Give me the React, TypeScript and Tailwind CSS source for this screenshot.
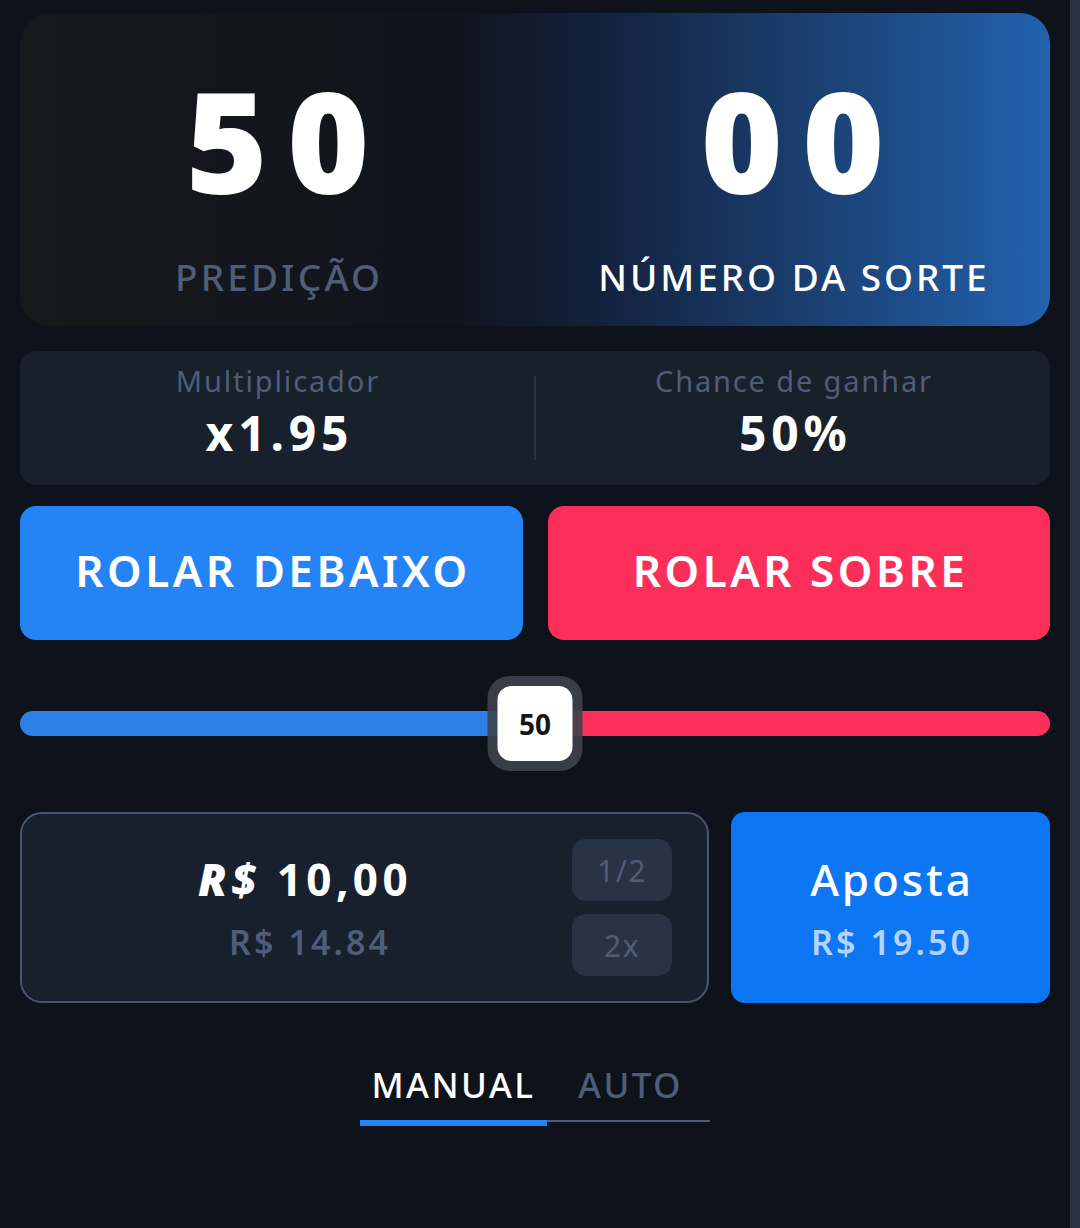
import { useState } from "react";

const font = { fontFamily: '"Noto Sans", "Open Sans", sans-serif' };

function TopCard() {
  return (
    <div className="flex h-[313px] rounded-[30px] bg-[linear-gradient(90deg,#17181b_0%,#10141d_42%,#12203a_55%,#1a3d6d_75%,#2262ae_100%)]">
      <div className="flex flex-1 flex-col items-center pt-[57px]">
        <div className="pl-[0.14em] text-[140px] font-black leading-none tracking-[0.14em] text-white">50</div>
        <div className="mt-[48px] pl-[0.087em] text-[37px] font-medium leading-none tracking-[0.087em] text-[#4f5d78]">PREDIÇÃO</div>
      </div>
      <div className="flex flex-1 flex-col items-center pt-[57px]">
        <div className="pl-[0.14em] text-[140px] font-black leading-none tracking-[0.14em] text-white">00</div>
        <div className="mt-[48px] pl-[0.08em] text-[37px] font-medium leading-none tracking-[0.08em] text-white">NÚMERO DA SORTE</div>
      </div>
    </div>
  );
}

function Stat({ label, value }: { label: string; value: string }) {
  return (
    <div className="flex flex-1 flex-col items-center">
      <div className="pl-[0.064em] text-[29px] leading-none tracking-[0.064em] text-[#4f5d78]">{label}</div>
      <div className="mt-[14px] pl-[0.1em] text-[48px] font-bold leading-none tracking-[0.1em] text-white">{value}</div>
    </div>
  );
}

function Stats() {
  return (
    <div className="flex h-[134px] items-center rounded-[16px] bg-[#18202c] pb-[14px]">
      <Stat label="Multiplicador" value="x1.95" />
      <div className="mt-[14px] h-[84px] w-[2px] bg-[#2a3342]" />
      <Stat label="Chance de ganhar" value="50%" />
    </div>
  );
}

function RollButtons() {
  return (
    <div className="flex gap-[25px]">
      <button className="flex h-[134px] flex-1 items-center justify-center rounded-[16px] bg-[#2584f5] pb-[6px] pl-[0.08em] text-[44px] font-semibold tracking-[0.08em] text-white">
        ROLAR DEBAIXO
      </button>
      <button className="flex h-[134px] flex-1 items-center justify-center rounded-[16px] bg-[#fc2f5b] pb-[6px] pl-[0.08em] text-[44px] font-semibold tracking-[0.08em] text-white">
        ROLAR SOBRE
      </button>
    </div>
  );
}

function Slider({ value }: { value: number }) {
  return (
    <div className="relative mt-[36px] h-[95px]">
      <div className="absolute left-0 right-0 top-[35px] flex h-[25px] overflow-hidden rounded-full">
        <div className="bg-[#2d80e5]" style={{ width: `${value}%` }} />
        <div className="flex-1 bg-[#fc2f5b]" />
      </div>
      <div
        className="absolute top-0 flex h-[95px] w-[95px] -translate-x-1/2 items-center justify-center rounded-[22px] bg-[#3d424c]/90"
        style={{ left: `${value}%` }}
      >
        <div className="flex h-[75px] w-[75px] items-center justify-center rounded-[14px] bg-white text-[28px] font-bold text-[#151515]">
          {value}
        </div>
      </div>
    </div>
  );
}

function Bet() {
  return (
    <div className="mt-[41px] flex gap-[22px]">
      <div className="flex h-[191px] w-[689px] items-center rounded-[22px] border-2 border-[#475571] bg-[#18202d] pr-[35px]">
        <div className="flex flex-1 flex-col items-center pl-[16px]">
          <div className="text-[44px] font-bold leading-none tracking-[0.1em] text-white">
            <span className="font-black italic">R$</span> 10,00
          </div>
          <div className="mt-[24px] pl-[10px] text-[34px] font-semibold leading-none tracking-[0.09em] text-[#4f5d78]">R$ 14.84</div>
        </div>
        <div className="flex flex-col gap-[13px]">
          <button className="h-[62px] w-[100px] rounded-[14px] bg-[#283345] text-[30px] tracking-[0.05em] text-[#4f5d78]">1/2</button>
          <button className="h-[62px] w-[100px] rounded-[14px] bg-[#283345] text-[30px] tracking-[0.05em] text-[#4f5d78]">2x</button>
        </div>
      </div>
      <button className="flex h-[191px] flex-1 flex-col items-center justify-center rounded-[14px] bg-[#0c76f5]">
        <span className="pl-[0.065em] text-[44px] font-medium leading-none tracking-[0.065em] text-white">Aposta</span>
        <span className="mt-[24px] pl-[0.09em] text-[34px] font-semibold leading-none tracking-[0.09em] text-[#b5d3fb]">R$ 19.50</span>
      </button>
    </div>
  );
}

function Tabs() {
  const [tab, setTab] = useState("MANUAL");
  return (
    <div className="mt-[64px] flex justify-center">
      <div className="flex w-[350px] flex-col">
        <div className="flex">
          {["MANUAL", "AUTO"].map((t) => (
            <button
              key={t}
              onClick={() => setTab(t)}
              className={
                "pb-[18px] text-[35px] font-medium leading-none tracking-[0.07em] " +
                (t === "MANUAL" ? "w-[187px] " : "pl-[31px] ") +
                (tab === t ? "text-white" : "text-[#4f5d78]")
              }
            >
              {t}
            </button>
          ))}
        </div>
        <div className="relative h-[6px]">
          <div className="absolute left-0 right-0 top-0 h-[2px] bg-[#4f5d78]" />
          <div className="absolute left-0 top-0 h-[6px] w-[187px] bg-[#2584f5]" />
        </div>
      </div>
    </div>
  );
}

export default function App() {
  return (
    <div className="flex h-[1228px] bg-[#0e121a]" style={font}>
      <div className="flex-1 px-5 pt-[13px]">
        <TopCard />
        <div className="mt-[25px]">
          <Stats />
        </div>
        <div className="mt-[21px]">
          <RollButtons />
        </div>
        <Slider value={50} />
        <Bet />
        <Tabs />
      </div>
      <div className="w-[10px] bg-[#2b3342]" />
    </div>
  );
}
